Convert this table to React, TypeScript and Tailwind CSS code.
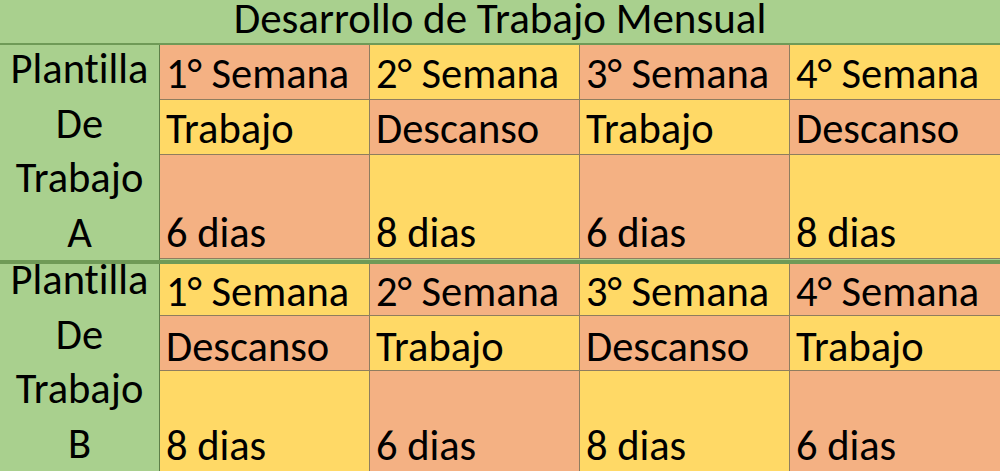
import React from "react";

const SAL = "bg-[#f4b183]";
const YEL = "bg-[#ffd966]";

type Cell = { t: string; c: string };

function Section({
  letter,
  rows,
  rowCls,
  labelCls,
}: {
  letter: string;
  rows: Cell[][];
  rowCls: string[];
  labelCls: string;
}) {
  return (
    <div className="flex">
      <div className="w-[160px] shrink-0 border-r border-[#5e7f49] flex flex-col items-center">
        <div className={`flex flex-col items-center text-center leading-[54.5px] ${labelCls}`}>
          <div>Plantilla</div>
          <div>De</div>
          <div>Trabajo</div>
          <div>{letter}</div>
        </div>
      </div>
      <div className="flex-1 flex flex-col">
        {rows.map((row, ri) => (
          <div key={ri} className={`grid grid-cols-4 ${rowCls[ri]}`}>
            {row.map((cell, ci) => (
              <div
                key={ci}
                className={`${cell.c} flex items-end pl-[6px] leading-[42px] border-[#8f7d5e] ${
                  ci < 3 ? "border-r" : ""
                } whitespace-nowrap overflow-hidden`}
              >
                {cell.t}
              </div>
            ))}
          </div>
        ))}
      </div>
    </div>
  );
}

export default function App() {
  const font = {
    fontFamily: 'Carlito, Calibri, "Open Sans", sans-serif',
  };
  const a: Cell[][] = [
    [
      { t: "1° Semana", c: SAL },
      { t: "2° Semana", c: YEL },
      { t: "3° Semana", c: SAL },
      { t: "4° Semana", c: YEL },
    ],
    [
      { t: "Trabajo", c: YEL },
      { t: "Descanso", c: SAL },
      { t: "Trabajo", c: YEL },
      { t: "Descanso", c: SAL },
    ],
    [
      { t: "6 dias", c: SAL },
      { t: "8 dias", c: YEL },
      { t: "6 dias", c: SAL },
      { t: "8 dias", c: YEL },
    ],
  ];
  const b: Cell[][] = [
    [
      { t: "1° Semana", c: YEL },
      { t: "2° Semana", c: SAL },
      { t: "3° Semana", c: YEL },
      { t: "4° Semana", c: SAL },
    ],
    [
      { t: "Descanso", c: SAL },
      { t: "Trabajo", c: YEL },
      { t: "Descanso", c: SAL },
      { t: "Trabajo", c: YEL },
    ],
    [
      { t: "8 dias", c: YEL },
      { t: "6 dias", c: SAL },
      { t: "8 dias", c: YEL },
      { t: "6 dias", c: SAL },
    ],
  ];
  return (
    <div
      className="w-[1000px] h-[471px] overflow-hidden bg-[#a9d08e] text-black text-[42.5px] [font-variant-ligatures:none]"
      style={font}
    >
      <div className="h-[45px] flex items-end justify-center pb-[5px] leading-[38px] text-[43px] border-b-2 border-[#6f9a57]">
        Desarrollo de Trabajo Mensual
      </div>
      <Section
        letter="A"
        labelCls="-mt-[3px]"
        rows={a}
        rowCls={[
          "h-[55px] [&>div]:border-b [&>div]:pb-[4px]",
          "h-[55px] [&>div]:border-b [&>div]:pb-[4px]",
          "h-[104px] [&>div]:border-b [&>div]:pb-[4px]",
        ]}
      />
      <div className="h-[4px] bg-[#6f9a57]" />
      <Section
        letter="B"
        labelCls="-mt-[11px]"
        rows={b}
        rowCls={[
          "h-[52px] [&>div]:border-b [&>div]:pb-[2px]",
          "h-[55px] [&>div]:border-b [&>div]:pb-[2px]",
          "h-[101px] [&>div]:pb-[5px]",
        ]}
      />
    </div>
  );
}
